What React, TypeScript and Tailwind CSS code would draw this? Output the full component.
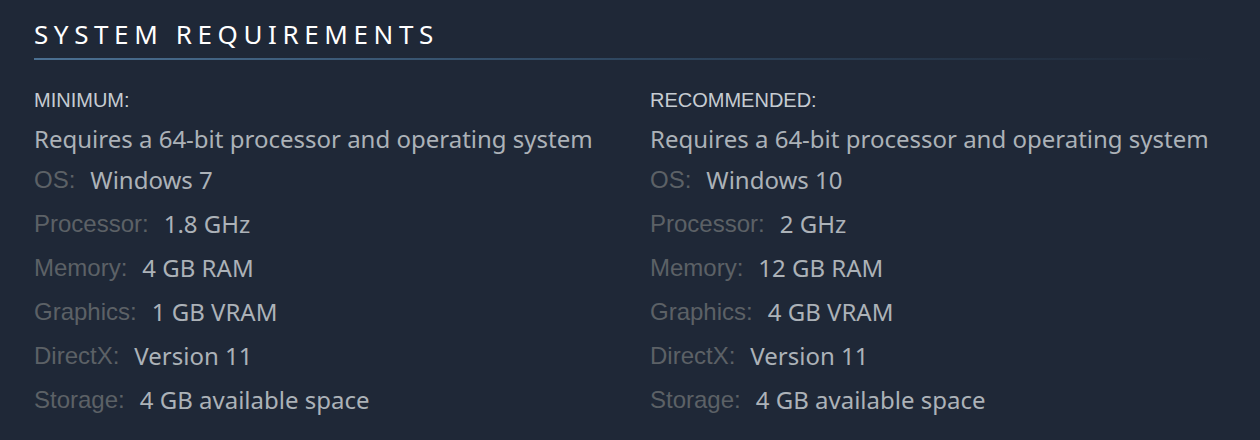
const minimum = [
  { label: "OS:", value: "Windows 7" },
  { label: "Processor:", value: "1.8 GHz" },
  { label: "Memory:", value: "4 GB RAM" },
  { label: "Graphics:", value: "1 GB VRAM" },
  { label: "DirectX:", value: "Version 11" },
  { label: "Storage:", value: "4 GB available space" },
];

const recommended = [
  { label: "OS:", value: "Windows 10" },
  { label: "Processor:", value: "2 GHz" },
  { label: "Memory:", value: "12 GB RAM" },
  { label: "Graphics:", value: "4 GB VRAM" },
  { label: "DirectX:", value: "Version 11" },
  { label: "Storage:", value: "4 GB available space" },
];

type Req = { label: string; value: string };

function ReqColumn({ title, items }: { title: string; items: Req[] }) {
  return (
    <div>
      <div className="h-[24px] leading-[24px] text-[20px] text-[#c6ccd2] font-['Liberation_Sans',Arial,sans-serif]">
        {title}
      </div>
      <div className="mt-[8px] h-[38px] leading-[38px] text-[24px] text-[#acb2b8] font-['Noto_Sans',sans-serif] whitespace-nowrap">
        Requires a 64-bit processor and operating system
      </div>
      <ul>
        {items.map((r) => (
          <li key={r.label} className="h-[44px] flex items-center whitespace-nowrap">
            <span className="text-[24px] text-[#5c6166] font-['Liberation_Sans',Arial,sans-serif]">
              {r.label}
            </span>
            <span className="ml-[15px] text-[24px] text-[#acb2b8] font-['Noto_Sans',sans-serif]">
              {r.value}
            </span>
          </li>
        ))}
      </ul>
    </div>
  );
}

export default function App() {
  return (
    <div className="w-[1260px] h-[440px] bg-[#1f2837] overflow-hidden px-[34px] pt-[16px]">
      {/* Heading */}
      <h2 className="h-[36px] leading-[36px] text-[26px] text-white tracking-[5.6px] uppercase font-['Noto_Sans',sans-serif]">
        System Requirements
      </h2>
      <div className="mt-[6px] h-[2px] w-[1180px] bg-gradient-to-r from-[#4b7092] via-[#2f4760] to-transparent" />

      {/* Columns */}
      <div className="mt-[28px] grid grid-cols-[616px_1fr]">
        <ReqColumn title="MINIMUM:" items={minimum} />
        <ReqColumn title="RECOMMENDED:" items={recommended} />
      </div>
    </div>
  );
}
